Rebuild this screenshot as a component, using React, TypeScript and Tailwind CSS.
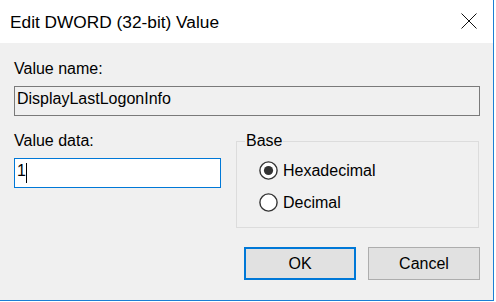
import React from "react";

function Radio({ checked, label }: { checked: boolean; label: string }) {
  return (
    <div className="flex items-center h-[19px] gap-[5px]">
      <svg width="19" height="19" viewBox="0 0 19 19" className="shrink-0">
        <circle cx="9.5" cy="9.5" r="8.6" fill="#ffffff" stroke="#333333" strokeWidth="1.4" />
        {checked && <circle cx="9.5" cy="9.5" r="4.6" fill="#333333" />}
      </svg>
      <span className="leading-[18px]">{label}</span>
    </div>
  );
}

export default function App() {
  return (
    <div
      className="w-[496px] h-[302px] bg-white text-black text-[16px]"
      style={{ fontFamily: '"Liberation Sans", Arial, sans-serif' }}
    >
      <div className="w-[494px] h-[301px] border-r border-b border-[#1a7fd4] bg-[#f0f0f0] flex flex-col">
        <div className="h-[43px] bg-white flex items-start pl-[10px] pr-[16px] shrink-0">
          <span className="pt-[12px] text-[17.3px] leading-[20px]">Edit DWORD (32-bit) Value</span>
          <svg width="16" height="16" viewBox="0 0 16 16" className="ml-auto mt-[13px]">
            <path d="M0.5 0.5 L15.5 15.5 M15.5 0.5 L0.5 15.5" stroke="#111111" strokeWidth="1" fill="none" />
          </svg>
        </div>
        <div className="pl-[14px] pr-[13px] pt-[17px] flex flex-col">
          <div className="leading-[18px]">Value name:</div>
          <div className="mt-[8px] h-[30px] border border-[#7a7a7a] bg-[#f0f0f0] pl-[2px] pt-[3px] leading-[18px]">
            DisplayLastLogonInfo
          </div>
          <div className="mt-[16px] flex gap-[15px]">
            <div className="w-[207px] flex flex-col">
              <div className="leading-[18px]">Value data:</div>
              <div className="mt-[8px] h-[30px] border border-[#0078d7] bg-white pl-[2px] pt-[3px] flex items-start">
                <span className="leading-[18px]">1</span>
                <span className="inline-block w-px h-[20px] bg-black mt-[1px]" />
              </div>
            </div>
            <fieldset className="w-[243px] h-[96px] border border-[#dcdcdc] pl-[22px] pt-[11px] flex flex-col gap-[13px]">
              <legend className="-ml-[14px] px-[1px] leading-[18px]">Base</legend>
              <Radio checked label="Hexadecimal" />
              <Radio checked={false} label="Decimal" />
            </fieldset>
          </div>
          <div className="mt-[19px] flex justify-end gap-[12px]">
            <button className="w-[112px] h-[33px] border-2 border-[#0078d7] bg-[#e1e1e1] leading-[18px]">
              OK
            </button>
            <button className="w-[112px] h-[33px] border border-[#adadad] bg-[#e1e1e1] leading-[18px]">
              Cancel
            </button>
          </div>
        </div>
      </div>
    </div>
  );
}
